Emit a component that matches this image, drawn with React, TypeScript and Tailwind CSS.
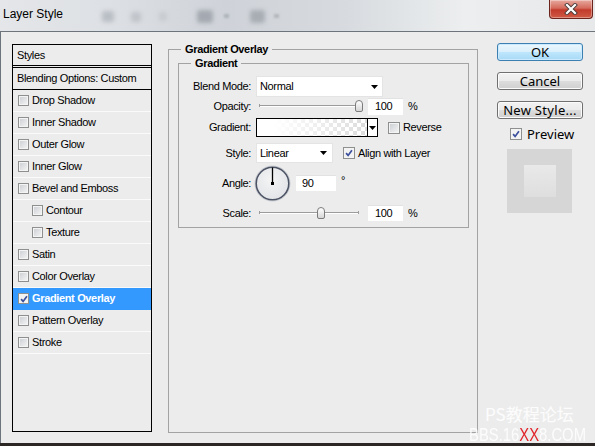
import React from 'react';

const items: { name: string; indent?: boolean; active?: boolean }[] = [
  { name: 'Drop Shadow' },
  { name: 'Inner Shadow' },
  { name: 'Outer Glow' },
  { name: 'Inner Glow' },
  { name: 'Bevel and Emboss' },
  { name: 'Contour', indent: true },
  { name: 'Texture', indent: true },
  { name: 'Satin' },
  { name: 'Color Overlay' },
  { name: 'Gradient Overlay', active: true },
  { name: 'Pattern Overlay' },
  { name: 'Stroke' },
];

function Check({ on = false, className = 'h-[11px] w-[11px]' }: { on?: boolean; className?: string }) {
  return (
    <span
      className={`flex shrink-0 items-center justify-center border border-[#8e8f8f] shadow-[inset_0_0_0_1px_#f4f4f4] ${
        on ? 'bg-[#f3f3f3]' : 'bg-[linear-gradient(135deg,#c9cdd2,#f6f6f6)]'
      } ${className}`}
    >
      {on && (
        <svg viewBox="0 0 9 9" className="h-[8px] w-[8px]">
          <path d="M1.2 4.6 L3.5 7.2 L7.8 1.3" fill="none" stroke="#3b4f9c" strokeWidth="1.9" />
        </svg>
      )}
    </span>
  );
}

function Down() {
  return (
    <svg width="7" height="4" viewBox="0 0 7 4">
      <path d="M0 0h7L3.5 4z" fill="#000" />
    </svg>
  );
}

function Slider({ thumb }: { thumb: string }) {
  return (
    <div className="relative h-[16px] w-[108px] shrink-0">
      <div className="absolute left-[3px] top-[7px] h-[2px] w-[100px] border-t border-[#9c9c9c] bg-white" />
      <div className="absolute left-[3px] top-[6px] h-[3px] w-px bg-[#9c9c9c]" />
      <div className="absolute left-[102px] top-[6px] h-[3px] w-px bg-[#9c9c9c]" />
      <div
        className={`absolute top-[2px] h-[12px] w-[8px] rounded-t-[4px] rounded-b-[2px] border border-[#7c7c7c] bg-[linear-gradient(to_bottom,#ffffff,#d6d6d6)] ${thumb}`}
      />
    </div>
  );
}

function Field({ value, className }: { value: string; className: string }) {
  return <div className={`flex shrink-0 items-center border-t border-[#e2e2e2] bg-white ${className}`}>{value}</div>;
}

function Label({ children }: { children: React.ReactNode }) {
  return <span className="w-[72px] shrink-0 text-right">{children}</span>;
}

function StylesList() {
  return (
    <div className="h-[388px] w-[140px] shrink-0 border border-black">
      <div className="flex h-[23px] items-center border-b-[3px] border-double border-black pl-[4px]">Styles</div>
      <div className="flex h-[22px] items-center border-b border-black pl-[4px]">Blending Options: Custom</div>
      {items.map((item) => (
        <div
          key={item.name}
          className={`flex h-[22px] items-center gap-[3px] border-b ${
            item.active ? 'border-[#3399ff] bg-[#3399ff] font-bold text-white' : 'border-[#fafafa]'
          } ${item.indent ? 'pl-[19px]' : 'pl-[5px]'}`}
        >
          <Check on={item.active} />
          <span>{item.name}</span>
        </div>
      ))}
    </div>
  );
}

function GradientPanel() {
  return (
    <fieldset className="-mt-[1px] ml-[16px] h-[390px] w-[310px] shrink-0 border border-[#a3a3a3]">
      <legend className="ml-[12px] px-[4px] font-bold leading-[12px]">Gradient Overlay</legend>
      <fieldset className="ml-[9px] mt-[2px] w-[291px] border border-[#a3a3a3] pb-[6px]">
        <legend className="ml-[12px] px-[4px] font-bold leading-[12px]">Gradient</legend>

        <div className="mt-[7px] flex h-[21px] items-center">
          <Label>Blend Mode:</Label>
          <div className="ml-[5px] flex h-[21px] w-[127px] items-center justify-between border border-[#e4e4e4] bg-white pl-[3px] pr-[4px]">
            <span>Normal</span>
            <Down />
          </div>
        </div>

        <div className="flex h-[18px] items-center">
          <Label>Opacity:</Label>
          <div className="ml-[5px] flex items-center">
            <Slider thumb="left-[99px]" />
            <Field value="100" className="ml-[4px] h-[17px] w-[35px] pl-[7px]" />
            <span className="ml-[5px]">%</span>
          </div>
        </div>

        <div className="mt-[3px] flex h-[19px] items-center">
          <Label>Gradient:</Label>
          <div className="ml-[5px] flex h-[19px] w-[122px] border border-black">
            <div className="flex-1 bg-[linear-gradient(to_right,#ffffff_15%,rgba(255,255,255,0)),repeating-conic-gradient(#dcdcdc_0_25%,#ffffff_0_50%)] [background-size:100%_100%,8px_8px]" />
            <div className="flex w-[10px] items-center justify-center border-l border-black bg-white">
              <Down />
            </div>
          </div>
          <Check className="ml-[10px] h-[12px] w-[12px]" />
          <span className="ml-[3px]">Reverse</span>
        </div>

        <div className="mt-[6px] flex h-[20px] items-center">
          <Label>Style:</Label>
          <div className="ml-[5px] flex h-[20px] w-[77px] items-center justify-between border border-[#e4e4e4] bg-white pl-[3px] pr-[5px]">
            <span>Linear</span>
            <Down />
          </div>
          <Check on className="ml-[10px] h-[12px] w-[12px]" />
          <span className="ml-[3px]">Align with Layer</span>
        </div>

        <div className="mt-[3px] flex h-[34px] items-center">
          <Label>Angle:</Label>
          <svg width="37" height="37" viewBox="0 0 37 37" className="ml-[3px] shrink-0">
            <defs>
              <radialGradient id="dial" cx="0.45" cy="0.4" r="0.6">
                <stop offset="0" stopColor="#f4f4f4" />
                <stop offset="1" stopColor="#e2e4e8" />
              </radialGradient>
            </defs>
            <circle cx="18.5" cy="18.5" r="17.5" fill="none" stroke="#c9ccd3" strokeWidth="1" />
            <circle cx="18.5" cy="18.5" r="16.3" fill="url(#dial)" stroke="#4c5364" strokeWidth="1.6" />
            <line x1="18.5" y1="2.5" x2="18.5" y2="18.5" stroke="#000" strokeWidth="1.3" />
            <rect x="17" y="17" width="3" height="3" fill="#000" />
          </svg>
          <Field value="90" className="ml-[5px] h-[16px] w-[40px] pl-[6px]" />
          <span className="ml-[5px] -mt-[6px]">°</span>
        </div>

        <div className="mt-[5px] flex h-[16px] items-center">
          <Label>Scale:</Label>
          <div className="ml-[5px] flex items-center">
            <Slider thumb="left-[61px]" />
            <Field value="100" className="ml-[4px] h-[16px] w-[35px] pl-[7px]" />
            <span className="ml-[5px]">%</span>
          </div>
        </div>
      </fieldset>
    </fieldset>
  );
}

function Btn({ children, primary = false, className = '' }: { children: React.ReactNode; primary?: boolean; className?: string }) {
  return (
    <div
      className={`flex h-[18px] w-[86px] items-center justify-center rounded-[3px] border leading-none ${
        primary
          ? 'border-[#3c7fb1] bg-[linear-gradient(to_bottom,#eaf6fd_0%,#d9f0fc_50%,#bee6fd_51%,#a7d9f5_100%)] shadow-[inset_0_0_0_1px_#cbeaff]'
          : 'border-[#707070] bg-[linear-gradient(to_bottom,#f2f2f2_0%,#ebebeb_50%,#dddddd_51%,#cfcfcf_100%)] shadow-[inset_0_0_0_1px_#fbfbfb]'
      } ${className}`}
    >
      {children}
    </div>
  );
}

function Buttons() {
  return (
    <div className="-mt-[1px] ml-[19px] flex w-[86px] shrink-0 flex-col font-['Noto_Sans',Arial,sans-serif] text-[13px] tracking-normal">
      <Btn primary>OK</Btn>
      <Btn className="mt-[11px]">Cancel</Btn>
      <Btn className="mt-[11px] tracking-[0.3px]">New Style...</Btn>
      <div className="mt-[9px] flex h-[12px] items-center">
        <Check on className="ml-[13px] h-[12px] w-[12px]" />
        <span className="ml-[5px] leading-none">Preview</span>
      </div>
      <div className="ml-[10px] mt-[9px] flex h-[64px] w-[65px] items-center justify-center bg-[#d6d6d6]">
        <div className="h-[32px] w-[32px] bg-[linear-gradient(to_bottom,#e9e9e9,#dedede)]" />
      </div>
    </div>
  );
}

function TitleBar() {
  return (
    <div className="relative flex h-[31px] items-start bg-[linear-gradient(to_right,#e4e6e9_0%,#dde0e4_18%,#cfd3d9_38%,#d7dbdf_58%,#eceeef_78%,#e6e8ea_100%)] tracking-normal">
      <div className="absolute left-[102px] top-[11px] h-[11px] w-[12px] rounded-[3px] bg-[#b9bec5] blur-[2px]" />
      <div className="absolute left-[131px] top-[12px] h-[10px] w-[10px] rounded-[3px] bg-[#c0c4ca] blur-[2px]" />
      <div className="absolute left-[159px] top-[12px] h-[9px] w-[8px] rounded-[3px] bg-[#c7cbd0] blur-[2px]" />
      <div className="absolute left-[197px] top-[10px] h-[13px] w-[16px] rounded-[3px] bg-[#a4a9b1] blur-[2px]" />
      <div className="absolute left-[224px] top-[14px] h-[4px] w-[5px] bg-[#aeb3ba] blur-[1px]" />
      <div className="absolute left-[250px] top-[10px] h-[13px] w-[15px] rounded-[3px] bg-[#a8adb4] blur-[2px]" />
      <div className="absolute left-[274px] top-[14px] h-[4px] w-[5px] bg-[#b3b7bd] blur-[1px]" />
      <span className="relative ml-[3px] mt-[7px] font-['Liberation_Sans',Arial,sans-serif] text-[12px] leading-[14px]">Layer Style</span>
      <div className="relative ml-auto mr-[2px] flex h-[19px] w-[44px] items-center justify-center rounded-b-[4px] border border-t-0 border-[#6b231c] bg-[linear-gradient(to_bottom,#e8a99f_0%,#d46a5c_45%,#c23a2b_55%,#cf5b45_100%)] shadow-[inset_0_0_0_1px_rgba(255,255,255,0.35)]">
        <svg width="14" height="12" viewBox="0 0 14 12">
          <path d="M3 2 L11 10 M11 2 L3 10" stroke="#4a3b3a" strokeWidth="4" strokeLinecap="square" />
          <path d="M3 2 L11 10 M11 2 L3 10" stroke="#ffffff" strokeWidth="2.2" strokeLinecap="square" />
        </svg>
      </div>
    </div>
  );
}

export default function App() {
  return (
    <div className="relative h-[446px] w-[595px] overflow-hidden bg-[#ececec] font-['Liberation_Sans',Arial,sans-serif] text-[11px] leading-[13px] tracking-[-0.35px] text-black">
      <TitleBar />
      <div className="flex h-[412px] border-l border-t border-[#6d747c] pl-[11px] pt-[12px]">
        <StylesList />
        <GradientPanel />
        <Buttons />
      </div>
      <div className="h-[3px] bg-[#2c2624]" />
      <div className="pointer-events-none absolute left-[469px] top-[404px] tracking-normal text-white/85">
        <div className="ml-[16px] font-['Noto_Sans_CJK_SC',sans-serif] text-[17px] leading-[20px]">PS教程论坛</div>
        <div className="mt-[2px] origin-left scale-x-[0.78] whitespace-nowrap font-['Liberation_Sans',sans-serif] text-[19px] leading-[18px]">
          BBS.16<span className="text-[#e0252b]">XX</span>8.COM
        </div>
      </div>
    </div>
  );
}
